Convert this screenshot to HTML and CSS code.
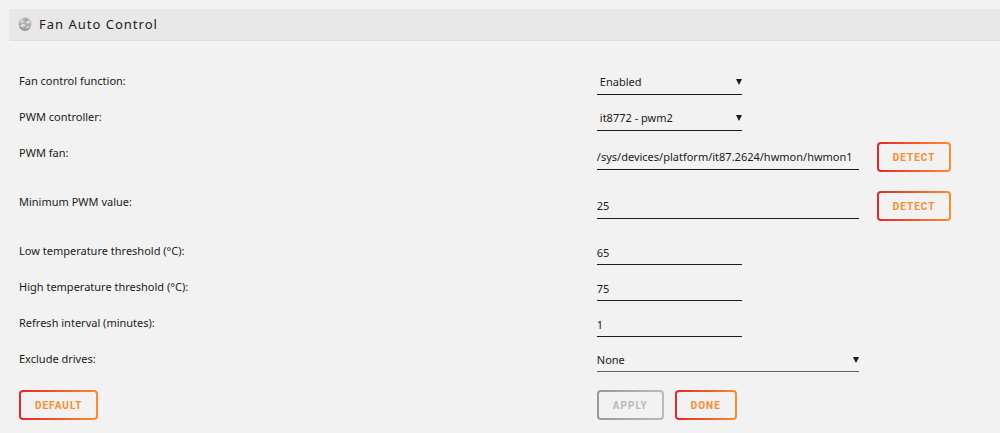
FILE: index.html
```html
<!DOCTYPE html>
<html lang="en">
<head>
    <meta charset="UTF-8">
    <title>Fan Auto Control</title>
    <link rel="stylesheet" href="styles.css">
</head>
<body>

<h1 class="title">
    <svg class="icon" viewBox="0 0 14 14" aria-hidden="true">
        <circle cx="7" cy="7" r="6.5" fill="#b2b2b4"/>
        <path d="M1.500 4.500 L4 2 L6 1.500 L5 4 L7 5 L3 6.500 Z" fill="#d2d2d2"/>
        <path d="M8 5 L11.500 3.500 L12.500 6 L9 6.500 Z M2 8 L6 7 L7.500 8.500 L4 10 Z M8.500 10 L11 8.500 L10 11 Z" fill="#e4e4e4"/>
        <path d="M7 1.500 L9 1.500 L8 4 Z M1 7 L4 6.500 L2 8 Z M8 8 L12 7.500 L9 9 Z M5 11 L7 10 L7 12 Z" fill="#98989b"/>
        <path d="M1.500 10 A6.300 6.300 0 0 0 11.500 11.500" fill="none" stroke="#808084"/>
    </svg>
    Fan Auto Control
</h1>

<form class="settings" onsubmit="return false">
    <div class="row">
        <label for="service">Fan control function:</label>
        <div class="field">
            <select id="service" class="narrow">
                <option>Disabled</option>
                <option selected>Enabled</option>
            </select>
        </div>
    </div>
    <div class="row">
        <label for="controller">PWM controller:</label>
        <div class="field">
            <select id="controller" class="narrow">
                <option>it8772 - pwm2</option>
                <option>it8772 - pwm3</option>
            </select>
        </div>
    </div>
    <div class="row detect">
        <label for="fan">PWM fan:</label>
        <div class="field">
            <input id="fan" type="text" value="/sys/devices/platform/it87.2624/hwmon/hwmon1">
            <button type="button">Detect</button>
        </div>
    </div>
    <div class="row detect">
        <label for="pwm">Minimum PWM value:</label>
        <div class="field">
            <input id="pwm" type="text" value="25">
            <button type="button">Detect</button>
        </div>
    </div>
    <div class="row">
        <label for="low">Low temperature threshold (°C):</label>
        <div class="field">
            <input id="low" type="text" class="narrow" value="65">
        </div>
    </div>
    <div class="row">
        <label for="high">High temperature threshold (°C):</label>
        <div class="field">
            <input id="high" type="text" class="narrow" value="75">
        </div>
    </div>
    <div class="row">
        <label for="interval">Refresh interval (minutes):</label>
        <div class="field">
            <input id="interval" type="text" class="narrow" value="1">
        </div>
    </div>
    <div class="row">
        <label for="exclude">Exclude drives:</label>
        <div class="field">
            <select id="exclude" class="drives">
                <option>None</option>
            </select>
        </div>
    </div>
    <div class="row actions">
        <div class="field">
            <button type="reset">Default</button>
        </div>
        <div class="field">
            <button type="submit" disabled>Apply</button>
            <button type="button">Done</button>
        </div>
    </div>
</form>

</body>
</html>
```
FILE: styles.css
```css
* {
    box-sizing: border-box;
}

body {
    margin: 0;
    padding: 9px 0 0 9px;
    background-color: #f2f2f2;
    color: #1c1b1b;
    font-family: "Noto Sans", sans-serif;
    font-size: 11px;
    line-height: 22px;
}

.title {
    display: flex;
    align-items: center;
    gap: 7px;
    height: 32px;
    margin: 0 0 29px;
    padding: 0 9px 2px;
    background-color: #e8e8e8;
    border-bottom: 1px solid #e0e0e0;
    font-size: 13px;
    font-weight: 400;
    letter-spacing: 1px;
}

.icon {
    width: 14px;
    height: 14px;
}

.settings {
    padding: 0 18px 12px 10px;
}

.row {
    display: grid;
    grid-template-columns: 3fr 2fr;
    align-items: start;
    min-height: 36px;
}

.row.detect {
    min-height: 49px;
}

.field {
    display: flex;
    align-items: center;
}

input,
select {
    width: 262px;
    height: 25px;
    margin: 0;
    padding: 0;
    background-color: transparent;
    border: none;
    border-bottom: 1px solid #1c1b1b;
    border-radius: 0;
    color: #1c1b1b;
    font: inherit;
    outline: none;
}

.narrow {
    width: 145px;
}

select {
    appearance: none;
    padding: 0 3px;
    background-image: url("data:image/svg+xml,%3Csvg xmlns='http://www.w3.org/2000/svg' viewBox='0 0 6 6'%3E%3Cpath d='M0 0h6L3 6z' fill='%231c1b1b'/%3E%3C/svg%3E");
    background-repeat: no-repeat;
    background-position: right center;
    background-size: 6px 6px;
}

.drives {
    height: 24px;
    padding: 0;
    border-color: #606060;
}

button {
    height: 30px;
    padding: 0 14px;
    border: 2px solid transparent;
    border-radius: 4px;
    background:
        linear-gradient(#f2f2f2, #f2f2f2) padding-box,
        linear-gradient(90deg, #e22828 0%, #ff8c2f 100%) border-box;
    color: #ff8c2f;
    font-family: Roboto, sans-serif;
    font-size: 10px;
    font-weight: 700;
    letter-spacing: 1px;
    text-transform: uppercase;
    cursor: pointer;
}

button:disabled {
    background:
        linear-gradient(#f2f2f2, #f2f2f2) padding-box,
        linear-gradient(90deg, #999 0%, #bbb 100%) border-box;
    color: #b8b8b8;
    cursor: default;
}

.detect button {
    margin-left: 18px;
}

.actions {
    padding-top: 6px;
}

.actions .field {
    gap: 11px;
}
```
